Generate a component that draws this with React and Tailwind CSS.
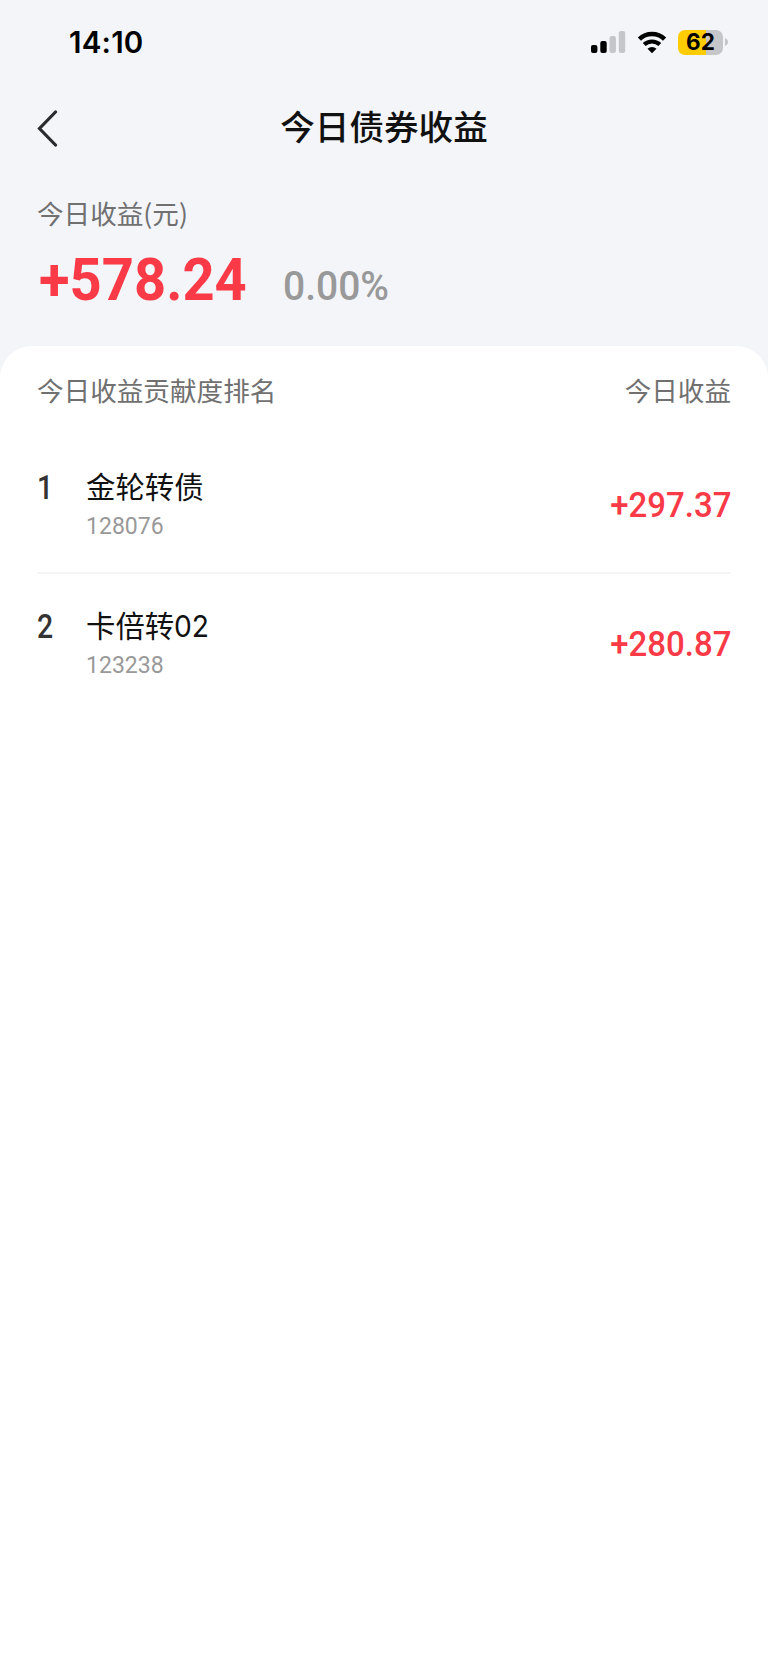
const ROWS = [
  { rank: '1', name: '金轮转债', digits: '', code: '128076', gain: '+297.37' },
  { rank: '2', name: '卡倍转', digits: '02', code: '123238', gain: '+280.87' },
];

function StatusBar() {
  return (
    <div className="flex h-[84px] items-center justify-between pl-[69px] pr-[40px]">
      <span className="pt-[2px] font-['Inter',sans-serif] text-[29.500px] leading-none font-semibold tracking-[0.2px] text-black">
        14:10
      </span>
      <div className="flex items-center">
        <svg className="h-[22px] w-[35px]" viewBox="0 0 35 22">
          <rect x="0" y="14" width="6.4" height="8" rx="2" fill="#000" />
          <rect x="9.3" y="10" width="6.4" height="12" rx="2" fill="#000" />
          <rect x="18.5" y="5" width="6.4" height="17" rx="2" fill="#c5c6c9" />
          <rect x="27.8" y="0" width="6.4" height="22" rx="2" fill="#c5c6c9" />
        </svg>
        <svg className="ml-[11px] h-[23px] w-[30px]" viewBox="0 0 30 23">
          <path d="M2.4 8.1a18 18 0 0 1 25.2 0" fill="none" stroke="#000" strokeWidth="4.6" />
          <path d="M7.2 13.6a11.3 11.3 0 0 1 15.6 0" fill="none" stroke="#000" strokeWidth="4.2" />
          <path d="M15 22.3l-4.5-4.5a6.4 6.4 0 0 1 9 0z" fill="#000" />
        </svg>
        <div className="ml-[11px] flex h-[25px] w-[45px] items-center justify-center rounded-[7px] bg-[linear-gradient(90deg,#ffcc00_62%,#c5c6c9_62%)]">
          <span className="font-['Inter',sans-serif] text-[22.500px] leading-none font-bold text-black">62</span>
        </div>
        <svg className="ml-[2px] h-[8px] w-[3px]" viewBox="0 0 3 8">
          <path d="M0 0C4 1.5 4 6.500 0 8z" fill="#c5c6c9" />
        </svg>
      </div>
    </div>
  );
}

function Row({ rank, name, digits, code, gain }) {
  return (
    <li className="flex h-[139px] items-center border-b-2 border-[#f5f5f5] last:border-transparent">
      <div className="w-[49px] self-start pt-[36px] font-['Roboto',sans-serif] text-[33px] leading-[34px] font-medium text-[#333]">
        <span className="inline-block origin-left scale-x-[0.86]">{rank}</span>
      </div>
      <div className="flex-1 self-start pt-[29px]">
        <div className="h-[42px] font-['Noto_Sans_CJK_SC',sans-serif] text-[29.400px] leading-[42px] text-[#111]">
          {name}
          <span className="inline-block origin-left scale-x-[0.96] font-['Inter',sans-serif] font-normal">{digits}</span>
        </div>
        <div className="mt-[4px] font-['Roboto',sans-serif] text-[24.500px] leading-[32px] font-[450] text-[#999]">
          <span className="inline-block origin-left scale-x-[0.94]">{code}</span>
        </div>
      </div>
      <div className="pt-[3px] font-['Roboto',sans-serif] text-[35.500px] leading-[44px] font-medium text-[#fa3a46]">
        <span className="inline-block origin-right scale-x-[0.93]">{gain}</span>
      </div>
    </li>
  );
}

export default function App() {
  return (
    <div className="flex min-h-[1663px] w-[768px] flex-col bg-[#f3f5f9] font-['Noto_Sans_CJK_SC',sans-serif]">
      <StatusBar />
      <header className="grid h-[88px] grid-cols-[1fr_auto_1fr] items-center px-[37px]">
        <svg className="h-[37px] w-[21px]" viewBox="0 0 21 37">
          <path d="M18.500 2L2.500 18.500L18.500 35" fill="none" stroke="#2b2b2d" strokeWidth="3.200" strokeLinecap="round" />
        </svg>
        <h1 className="pb-[7px] text-[34.600px] leading-[50px] font-medium text-[#111]">今日债券收益</h1>
      </header>
      <section className="h-[174px] px-[37px] pt-[22px]">
        <div className="text-[26.600px] leading-[38px] font-normal text-[#707070]">今日收益(元)</div>
        <div className="flex items-baseline pt-[2px] font-['Roboto',sans-serif]">
          <div className="box-content w-[244px] pl-[2px] text-[60px] leading-[92px] font-bold text-[#fa3a46]">
            <span className="inline-block origin-left scale-x-[0.935]">+578.24</span>
          </div>
          <div className="text-[40px] leading-[50px] font-medium text-[#999]">
            <span className="inline-block origin-left scale-x-[0.975]">0.00%</span>
          </div>
        </div>
      </section>
      <main className="flex-1 rounded-t-[32px] bg-white px-[37px]">
        <div className="flex h-[89px] items-center justify-between pb-[2px] text-[26.600px] font-normal text-[#707070]">
          <span>今日收益贡献度排名</span>
          <span>今日收益</span>
        </div>
        <ul>
          {ROWS.map((row) => (
            <Row key={row.code} {...row} />
          ))}
        </ul>
      </main>
    </div>
  );
}
